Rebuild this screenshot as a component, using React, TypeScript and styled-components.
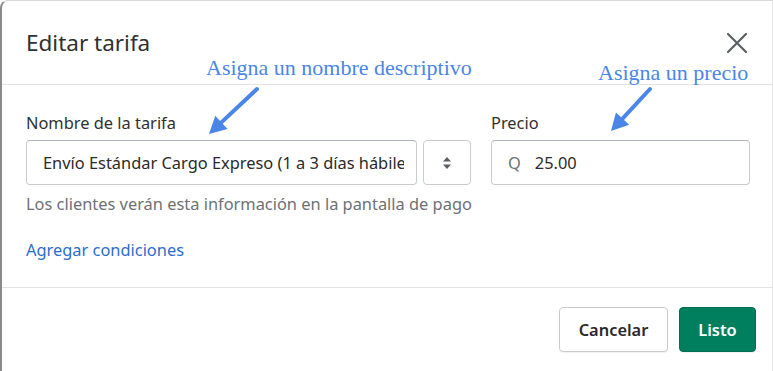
import React from "react";
import styled, { createGlobalStyle } from "styled-components";

const Global = createGlobalStyle`
  html, body { margin: 0; padding: 0; background: #ffffff; }
  body { font-family: "Noto Sans", "Open Sans", sans-serif; color: #202223; }
  * { box-sizing: border-box; }
`;

const Modal = styled.div`
  position: relative;
  width: 773px;
  height: 371px;
  background: #fff;
  border-left: 2px solid #8a8a8a;
  border-top: 1px solid #d9d9d9;
  border-right: 1px solid #e6e6e6;
  border-top-left-radius: 8px;
  display: flex;
  flex-direction: column;
  overflow: hidden;
`;

const Header = styled.div`
  height: 84px;
  display: flex;
  align-items: center;
  justify-content: space-between;
  padding: 0 22px 0 24px;
  border-bottom: 1px solid #e1e3e5;
`;

const Title = styled.h2`
  margin: 0;
  font-size: 22.5px;
  font-weight: 400;
  color: #303030;
`;

const CloseBtn = styled.button`
  border: 0;
  background: none;
  padding: 0;
  width: 26px;
  height: 26px;
  display: flex;
  align-items: center;
  justify-content: center;
`;

const Body = styled.div`
  flex: 1;
  padding: 28px 22px 0 24px;
  display: flex;
  flex-direction: column;
  border-bottom: 1px solid #e1e3e5;
`;

const Row = styled.div`
  display: flex;
  gap: 20px;
`;

const Field = styled.div<{ $w: number }>`
  width: ${(p) => p.$w}px;
  display: flex;
  flex-direction: column;
`;

const Label = styled.label`
  font-size: 16.4px;
  color: #303030;
  height: 20px;
  line-height: 20px;
  margin-bottom: 7px;
`;

const InputRow = styled.div`
  display: flex;
  gap: 6px;
`;

const Box = styled.div<{ $w: number }>`
  width: ${(p) => p.$w}px;
  height: 45px;
  border: 1px solid #c9cccf;
  border-top-color: #aeb4b9;
  border-radius: 4px;
  display: flex;
  align-items: center;
  padding: 0 12px 0 16px;
  background: #fff;
`;

const Input = styled.input`
  flex: 1;
  min-width: 0;
  border: 0;
  outline: none;
  padding: 0;
  background: transparent;
  font-family: "Noto Sans", sans-serif;
  font-size: 16.4px;
  color: #2a2a2a;
`;

const Stepper = styled.div`
  width: 48px;
  height: 45px;
  border: 1px solid #c9cccf;
  border-radius: 4px;
  display: flex;
  align-items: center;
  justify-content: center;
`;

const Prefix = styled.span`
  color: #6d7175;
  margin-right: 14px;
  font-size: 16.4px;
`;

const Help = styled.div`
  font-size: 16.4px;
  color: #6d7175;
  margin-top: 9px;
  line-height: 20px;
  white-space: nowrap;
`;

const Link = styled.a`
  margin-top: 24px;
  font-size: 16.4px;
  color: #2c6ecb;
  text-decoration: none;
`;

const Footer = styled.div`
  height: 83px;
  display: flex;
  align-items: center;
  justify-content: flex-end;
  gap: 11px;
  padding: 0 16px 0 0;
`;

const Button = styled.button<{ $primary?: boolean; $w: number }>`
  width: ${(p) => p.$w}px;
  height: 45px;
  padding: 0;
  border-radius: 4px;
  font-family: "Noto Sans", sans-serif;
  font-size: 16.4px;
  font-weight: 600;
  border: 1px solid ${(p) => (p.$primary ? "#006e52" : "#c9cccf")};
  background: ${(p) => (p.$primary ? "#007f5f" : "#fff")};
  color: ${(p) => (p.$primary ? "#fff" : "#2a2a2a")};
  box-shadow: 0 1px 0 rgba(0, 0, 0, 0.05);
`;

const Note = styled.div<{ $x: number; $y: number }>`
  position: absolute;
  left: ${(p) => p.$x}px;
  top: ${(p) => p.$y}px;
  font-family: "Liberation Serif", "Times New Roman", serif;
  font-size: 22px;
  color: #4a86e8;
  white-space: nowrap;
`;

const ArrowSvg = styled.svg<{ $x: number; $y: number }>`
  position: absolute;
  left: ${(p) => p.$x}px;
  top: ${(p) => p.$y}px;
  overflow: visible;
`;

function Arrow({ x, y, dx, dy }: { x: number; y: number; dx: number; dy: number }) {
  const len = Math.hypot(dx, dy);
  const ux = dx / len;
  const uy = dy / len;
  const head = 17;
  const hw = 9;
  const bx = dx - ux * head;
  const by = dy - uy * head;
  const px = -uy;
  const py = ux;
  return (
    <ArrowSvg $x={x} $y={y} width={1} height={1}>
      <line x1={0} y1={0} x2={bx} y2={by} stroke="#4a86e8" strokeWidth={4} strokeLinecap="round" />
      <polygon
        points={`${dx},${dy} ${bx + px * hw},${by + py * hw} ${bx - px * hw},${by - py * hw}`}
        fill="#4a86e8"
      />
    </ArrowSvg>
  );
}

export default function App() {
  return (
    <>
      <Global />
      <Modal>
        <Header>
          <Title>Editar tarifa</Title>
          <CloseBtn aria-label="Cerrar">
            <svg width="22" height="22" viewBox="0 0 22 22">
              <path d="M2 2 L20 20 M20 2 L2 20" stroke="#5c5f62" strokeWidth="2.2" strokeLinecap="round" />
            </svg>
          </CloseBtn>
        </Header>
        <Body>
          <Row>
            <Field $w={445}>
              <Label>Nombre de la tarifa</Label>
              <InputRow>
                <Box $w={392}>
                  <Input readOnly value="Envío Estándar Cargo Expreso (1 a 3 días hábiles)" />
                </Box>
                <Stepper>
                  <svg width="10" height="14" viewBox="0 0 10 14">
                    <path d="M5 1 L9 5.5 H1 Z M5 13 L9 8.5 H1 Z" fill="#5c5f62" />
                  </svg>
                </Stepper>
              </InputRow>
              <Help>Los clientes verán esta información en la pantalla de pago</Help>
            </Field>
            <Field $w={259}>
              <Label>Precio</Label>
              <Box $w={259}>
                <Prefix>Q</Prefix>
                <Input readOnly value="25.00" />
              </Box>
            </Field>
          </Row>
          <Link href="#">Agregar condiciones</Link>
        </Body>
        <Footer>
          <Button $w={109}>Cancelar</Button>
          <Button $w={77} $primary>Listo</Button>
        </Footer>
        <Note $x={204} $y={54}>Asigna un nombre descriptivo</Note>
        <Note $x={596} $y={59}>Asigna un precio</Note>
        <Arrow x={255} y={88} dx={-48} dy={45} />
        <Arrow x={648} y={88} dx={-39} dy={42} />
      </Modal>
    </>
  );
}
